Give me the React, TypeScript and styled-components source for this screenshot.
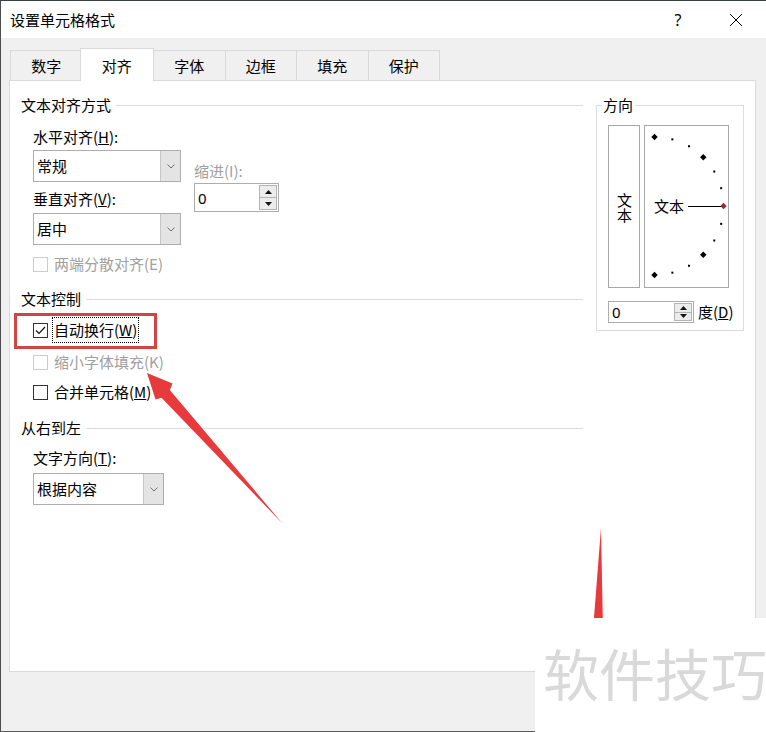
import styled, { createGlobalStyle } from 'styled-components';

const GlobalStyle = createGlobalStyle`
  html, body {
    margin: 0;
    padding: 0;
    background: #fff;
  }
  body {
    font-family: "Noto Sans CJK SC", "Noto Sans", sans-serif;
    font-size: 15px;
    line-height: 20px;
    color: #000;
  }
  * {
    box-sizing: border-box;
  }
`;

const Page = styled.div`
  position: relative;
  width: 766px;
  height: 732px;
  overflow: hidden;
`;

const Dialog = styled.div`
  width: 766px;
  height: 732px;
  background: #f0f0f0;
  border-top: 1px solid #36433d;
  border-left: 1px solid #4d4d4d;
  border-bottom: 1px solid #5c5c5c;
  display: flex;
  flex-direction: column;
`;

const TitleBar = styled.div`
  flex: none;
  height: 37px;
  background: #fff;
  display: flex;
  align-items: center;
  padding: 0 7px 0 9px;
`;

const Title = styled.div`
  flex: 1;
`;

const TitleButton = styled.div`
  width: 46px;
  height: 37px;
  margin-left: 12px;
  display: flex;
  align-items: center;
  justify-content: center;
  font-family: "Noto Sans", sans-serif;
  font-size: 16px;
`;

const TabStrip = styled.div`
  flex: none;
  height: 42px;
  display: flex;
  align-items: flex-end;
  padding-left: 9px;
  position: relative;
  z-index: 1;
`;

const Tab = styled.div<{ $active?: boolean }>`
  width: ${(p) => (p.$active ? 74.5 : 72.5)}px;
  height: ${(p) => (p.$active ? 33 : 30)}px;
  margin-left: ${(p) => (p.$active ? -3 : -1)}px;
  margin-bottom: ${(p) => (p.$active ? -1 : 0)}px;
  padding-top: ${(p) => (p.$active ? 1 : 0)}px;
  background: ${(p) => (p.$active ? '#fff' : '#f0f0f0')};
  border: 1px solid #d9d9d9;
  border-bottom: none;
  position: relative;
  z-index: ${(p) => (p.$active ? 2 : 1)};
  display: flex;
  align-items: center;
  justify-content: center;

  &:first-child {
    margin-left: 0;
  }
`;

const Panel = styled.div`
  flex: none;
  margin-left: 8px;
  width: 747px;
  height: 592px;
  background: #fff;
  border: 1px solid #d9d9d9;
  padding: 14px 0 0 11px;
  display: flex;
  align-items: flex-start;
  gap: 13px;
`;

const LeftColumn = styled.div`
  width: 562px;
  display: flex;
  flex-direction: column;
`;

const GroupHeader = styled.div<{ $mt?: number }>`
  height: 20px;
  margin-top: ${(p) => p.$mt ?? 0}px;
  display: flex;
  align-items: center;
  gap: 5px;

  &::after {
    content: '';
    flex: 1;
    height: 1px;
    background: #dcdcdc;
  }
`;

const Indent = styled.div`
  padding-left: 12px;
  display: flex;
  flex-direction: column;
`;

const AlignRow = styled.div`
  margin-top: 12px;
  display: flex;
  gap: 13px;
`;

const Stack = styled.div<{ $pt?: number }>`
  display: flex;
  flex-direction: column;
  padding-top: ${(p) => p.$pt ?? 0}px;
`;

const FieldLabel = styled.div<{ $mt?: number; $disabled?: boolean }>`
  height: 20px;
  margin-top: ${(p) => p.$mt ?? 0}px;
  color: ${(p) => (p.$disabled ? '#a0a0a0' : '#000')};
  white-space: nowrap;
`;

const SelectBox = styled.div<{ $w: number; $h: number; $mt?: number }>`
  width: ${(p) => p.$w}px;
  height: ${(p) => p.$h}px;
  margin-top: ${(p) => p.$mt ?? 0}px;
  border: 1px solid #adadad;
  background: #fff;
  display: flex;
`;

const SelectValue = styled.div`
  flex: 1;
  padding-left: 3px;
  display: flex;
  align-items: center;
`;

const SelectArrow = styled.div`
  width: 20px;
  background: #e4e4e4;
  border-left: 1px solid #c6c6c6;
  display: flex;
  align-items: center;
  justify-content: center;
`;

const SpinBox = styled.div<{ $w: number; $h: number; $mt?: number }>`
  width: ${(p) => p.$w}px;
  height: ${(p) => p.$h}px;
  margin-top: ${(p) => p.$mt ?? 0}px;
  border: 1px solid #adadad;
  background: #fff;
  display: flex;
  flex: none;
`;

const SpinValue = styled.div`
  flex: 1;
  padding-left: 3px;
  display: flex;
  align-items: center;
  font-family: "Noto Sans", sans-serif;
`;

const SpinButtons = styled.div`
  width: 19px;
  padding: 1px 1px 1px 0;
  display: flex;
  flex-direction: column;
`;

const SpinButton = styled.div`
  flex: 1;
  border: 1px solid #b4b4b4;
  background: #ececec;
  display: flex;
  align-items: center;
  justify-content: center;

  & + & {
    border-top: none;
  }
`;

const CheckRow = styled.div<{ $mt?: number; $disabled?: boolean }>`
  height: 20px;
  margin-top: ${(p) => p.$mt ?? 0}px;
  display: flex;
  align-items: center;
  gap: 6px;
  color: ${(p) => (p.$disabled ? '#a0a0a0' : '#000')};
  white-space: nowrap;
`;

const CheckBox = styled.span<{ $disabled?: boolean }>`
  flex: none;
  width: 15px;
  height: 15px;
  border: 1px solid ${(p) => (p.$disabled ? '#cccccc' : '#333')};
  background: #fff;
  display: flex;
  align-items: center;
  justify-content: center;
`;

const Focus = styled.span`
  margin-left: -2px;
  padding: 2px 1px;
  border: 1px dotted #000;
`;

const DirGroup = styled.fieldset`
  margin: 0;
  width: 148px;
  min-width: 0;
  padding: 10px 14px 7px 11px;
  border: 1px solid #dcdcdc;
`;

const DirLegend = styled.legend`
  margin-left: -6px;
  padding: 0 2px 0 1px;
  line-height: 20px;
`;

const DirRow = styled.div`
  display: flex;
  gap: 4px;
`;

const VerticalText = styled.div`
  width: 32px;
  height: 163px;
  border: 1px solid #a8a8a8;
  display: flex;
  align-items: center;
  justify-content: center;
  writing-mode: vertical-rl;
  line-height: 20px;
  padding-top: 3px;
`;

const Dial = styled.div`
  width: 85px;
  height: 163px;
  border: 1px solid #a8a8a8;
  display: flex;
`;

const DegreeRow = styled.div`
  margin-top: 13px;
  display: flex;
  align-items: center;
  gap: 4px;
  white-space: nowrap;
`;

const DegreeLabel = styled.span`
  flex: none;
`;

const Overlay = styled.svg`
  position: absolute;
  left: 0;
  top: 0;
  pointer-events: none;
`;

const Watermark = styled.div`
  position: absolute;
  left: 535px;
  top: 618px;
  right: 0;
  bottom: 0;
  background: #fff;
  color: #d9d9d9;
  font-size: 56px;
  line-height: 56px;
  padding: 26px 0 0 8px;
  white-space: nowrap;
`;

const tabs = ['数字', '对齐', '字体', '边框', '填充', '保护'];

const Chevron = () => (
  <svg width="8" height="5" viewBox="0 0 8 5">
    <polyline points="0.5,0.5 4,4 7.5,0.5" fill="none" stroke="#707070" strokeWidth="1" />
  </svg>
);

const Triangle = ({ up }: { up?: boolean }) => (
  <svg width="7" height="4" viewBox="0 0 7 4">
    <polygon points={up ? '3.5,0 7,4 0,4' : '0,0 7,0 3.5,4'} fill="#111" />
  </svg>
);

const Check = () => (
  <svg width="13" height="13" viewBox="0 0 13 13">
    <polyline points="2,6.5 5,9.5 11,3" fill="none" stroke="#111" strokeWidth="1.2" />
  </svg>
);

const Select = ({ w, h, mt, value }: { w: number; h: number; mt?: number; value: string }) => (
  <SelectBox $w={w} $h={h} $mt={mt}>
    <SelectValue>{value}</SelectValue>
    <SelectArrow>
      <Chevron />
    </SelectArrow>
  </SelectBox>
);

const Spin = ({ w, h, mt }: { w: number; h: number; mt?: number }) => (
  <SpinBox $w={w} $h={h} $mt={mt}>
    <SpinValue>0</SpinValue>
    <SpinButtons>
      <SpinButton>
        <Triangle up />
      </SpinButton>
      <SpinButton>
        <Triangle />
      </SpinButton>
    </SpinButtons>
  </SpinBox>
);

const dots = Array.from({ length: 13 }, (_, i) => {
  const a = ((-90 + i * 15) * Math.PI) / 180;
  return {
    x: 9.5 + 69 * Math.cos(a),
    y: 80 + 69 * Math.sin(a),
    kind: i === 6 ? 'red' : i % 3 === 0 ? 'big' : 'small',
  };
});

const diamond = (x: number, y: number, r: number) =>
  `${x},${y - r} ${x + r},${y} ${x},${y + r} ${x - r},${y}`;

const DialDrawing = () => (
  <svg width="83" height="161" viewBox="0 0 83 161">
    <text x="9" y="85.5" fontSize="15" fontFamily='"Noto Sans CJK SC", sans-serif' fill="#000">
      文本
    </text>
    <line x1="43" y1="80.5" x2="78" y2="80.5" stroke="#000" strokeWidth="1" />
    {dots.map((d, i) =>
      d.kind === 'small' ? (
        <rect key={i} x={d.x - 1} y={d.y - 1} width="2" height="2" fill="#000" />
      ) : (
        <polygon key={i} points={diamond(d.x, d.y, 3.2)} fill={d.kind === 'red' ? '#9a2a3a' : '#000'} />
      ),
    )}
  </svg>
);

export default function App() {
  return (
    <Page>
      <GlobalStyle />
      <Dialog>
        <TitleBar>
          <Title>设置单元格格式</Title>
          <TitleButton>?</TitleButton>
          <TitleButton>
            <svg width="14" height="14" viewBox="0 0 14 14">
              <path d="M1 1 L13 13 M13 1 L1 13" stroke="#000" strokeWidth="1" />
            </svg>
          </TitleButton>
        </TitleBar>

        <TabStrip>
          {tabs.map((t) => (
            <Tab key={t} $active={t === '对齐'}>
              {t}
            </Tab>
          ))}
        </TabStrip>

        <Panel>
          <LeftColumn>
            <GroupHeader>文本对齐方式</GroupHeader>
            <Indent>
              <AlignRow>
                <Stack>
                  <FieldLabel>
                    水平对齐(<u>H</u>):
                  </FieldLabel>
                  <Select w={148} h={32} mt={3} value="常规" />
                  <FieldLabel $mt={7}>
                    垂直对齐(<u>V</u>):
                  </FieldLabel>
                  <Select w={148} h={32} mt={4} value="居中" />
                </Stack>
                <Stack $pt={34}>
                  <FieldLabel $disabled>缩进(I):</FieldLabel>
                  <Spin w={85} h={29} mt={2} />
                </Stack>
              </AlignRow>
              <CheckRow $mt={9} $disabled>
                <CheckBox $disabled />
                <span>两端分散对齐(E)</span>
              </CheckRow>
            </Indent>

            <GroupHeader $mt={15}>文本控制</GroupHeader>
            <Indent>
              <CheckRow $mt={11}>
                <CheckBox>
                  <Check />
                </CheckBox>
                <Focus>
                  自动换行(<u>W</u>)
                </Focus>
              </CheckRow>
              <CheckRow $mt={12} $disabled>
                <CheckBox $disabled />
                <span>缩小字体填充(K)</span>
              </CheckRow>
              <CheckRow $mt={10}>
                <CheckBox />
                <span>
                  合并单元格(<u>M</u>)
                </span>
              </CheckRow>
            </Indent>

            <GroupHeader $mt={16}>从右到左</GroupHeader>
            <Indent>
              <FieldLabel $mt={10}>
                文字方向(<u>T</u>):
              </FieldLabel>
              <Select w={131} h={32} mt={5} value="根据内容" />
            </Indent>
          </LeftColumn>

          <DirGroup>
            <DirLegend>方向</DirLegend>
            <DirRow>
              <VerticalText>文本</VerticalText>
              <Dial>
                <DialDrawing />
              </Dial>
            </DirRow>
            <DegreeRow>
              <Spin w={86} h={22} />
              <DegreeLabel>
                度(<u>D</u>)
              </DegreeLabel>
            </DegreeRow>
          </DirGroup>
        </Panel>
      </Dialog>

      <Overlay width="766" height="732" viewBox="0 0 766 732">
        <rect x="15.5" y="314.5" width="140" height="33" fill="none" stroke="#d04545" strokeWidth="3" />
        <polygon
          points="147,373 172.5,383.5 169.8,390 282.5,523.5 161.5,397.8 155.5,399.5"
          fill="#e63a3c"
        />
        <polygon points="601,528 602.8,620 593.8,620" fill="#e63a3c" />
      </Overlay>
      <Watermark>软件技巧</Watermark>
    </Page>
  );
}
